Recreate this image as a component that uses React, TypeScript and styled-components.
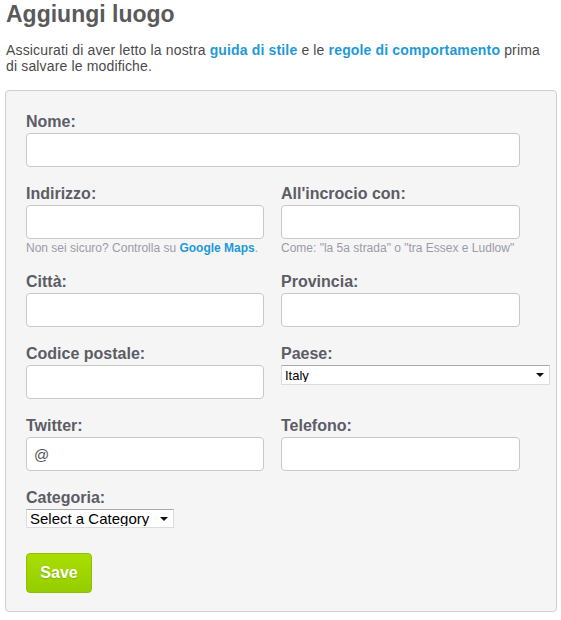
import React from "react";
import styled, { createGlobalStyle } from "styled-components";

const Global = createGlobalStyle`
  html, body { margin: 0; padding: 0; background: #fff; }
  body { font-family: "Liberation Sans", Arial, sans-serif; color: #444; }
  * { box-sizing: border-box; }
`;

const Page = styled.div`
  padding: 0 4px 0 5px;
  width: 561px;
`;

const Title = styled.h1`
  margin: 0;
  font-size: 23px;
  line-height: 28px;
  font-weight: bold;
  color: #5a5a5a;
  padding-left: 1px;
`;

const Intro = styled.p`
  margin: 14px 0 16px;
  padding-left: 1px;
  font-size: 14px;
  line-height: 16px;
  letter-spacing: 0.15px;
  color: #4a4a4a;
  width: 546px;
`;

const Link = styled.a`
  color: #1f9ad6;
  font-weight: bold;
  text-decoration: none;
`;

const Panel = styled.form`
  width: 552px;
  background: #f5f5f5;
  border: 1px solid #cfcfcf;
  border-radius: 4px;
  padding: 19px 20px 18px 20px;
  display: grid;
  grid-template-columns: 238px 239px;
  column-gap: 17px;
  row-gap: 15px;
  align-items: start;
`;

const Field = styled.div<{ $wide?: boolean }>`
  display: flex;
  flex-direction: column;
  grid-column: ${(p) => (p.$wide ? "1 / -1" : "auto")};
`;

const Label = styled.label`
  font-size: 16px;
  line-height: 20px;
  font-weight: bold;
  color: #5c5c66;
  padding-top: 2px;
  margin-bottom: 1px;
`;

const Input = styled.input`
  height: 34px;
  width: 100%;
  border: 1px solid #c9c9c9;
  border-radius: 4px;
  background: #fff;
  font-family: "Liberation Sans", Arial, sans-serif;
  font-size: 15px;
  color: #555;
  padding: 0 7px;
  outline: none;
`;

const Hint = styled.div`
  margin-top: 2px;
  font-size: 12px;
  line-height: 14px;
  color: #9b9ba6;
  white-space: nowrap;
`;

const HintLink = styled.a`
  color: #1f9ad6;
  font-weight: bold;
  text-decoration: none;
`;

const SelectWrap = styled.div<{ $w: number; $h: number }>`
  position: relative;
  width: ${(p) => p.$w}px;
  height: ${(p) => p.$h}px;
  &::after {
    content: "";
    position: absolute;
    right: 6px;
    top: 50%;
    margin-top: -2px;
    border-left: 4px solid transparent;
    border-right: 4px solid transparent;
    border-top: 4px solid #111;
    pointer-events: none;
  }
`;

const Select = styled.select<{ $size: number }>`
  appearance: none;
  -webkit-appearance: none;
  width: 100%;
  height: 100%;
  margin: 0;
  background: #fff;
  border: 1px solid #dcdcdc;
  border-top-color: #a9a9a9;
  border-radius: 0;
  font-family: "Liberation Sans", Arial, sans-serif;
  font-size: ${(p) => p.$size}px;
  color: #000;
  padding: 0 3px;
  line-height: 1;
  outline: none;
`;

const SaveRow = styled.div`
  grid-column: 1 / -1;
  margin-top: 10px;
`;

const SaveButton = styled.button`
  width: 66px;
  height: 40px;
  border: 1px solid #8fbf05;
  border-radius: 4px;
  background: linear-gradient(#a9de00, #95cd00);
  color: #fff;
  font-family: "Liberation Sans", Arial, sans-serif;
  font-weight: bold;
  font-size: 16px;
  text-shadow: 0 1px 1px rgba(80, 110, 0, 0.35);
  cursor: pointer;
  padding: 0;
`;

export default function App() {
  return (
    <>
      <Global />
      <Page>
        <Title>Aggiungi luogo</Title>
        <Intro>
          Assicurati di aver letto la nostra <Link href="#">guida di stile</Link> e le{" "}
          <Link href="#">regole di comportamento</Link> prima di salvare le modifiche.
        </Intro>
        <Panel onSubmit={(e) => e.preventDefault()}>
          <Field $wide>
            <Label>Nome:</Label>
            <Input />
          </Field>
          <Field>
            <Label>Indirizzo:</Label>
            <Input />
            <Hint>
              Non sei sicuro? Controlla su <HintLink href="#">Google Maps</HintLink>.
            </Hint>
          </Field>
          <Field>
            <Label>All'incrocio con:</Label>
            <Input />
            <Hint>Come: "la 5a strada" o "tra Essex e Ludlow"</Hint>
          </Field>
          <Field>
            <Label>Città:</Label>
            <Input />
          </Field>
          <Field>
            <Label>Provincia:</Label>
            <Input />
          </Field>
          <Field>
            <Label>Codice postale:</Label>
            <Input />
          </Field>
          <Field>
            <Label>Paese:</Label>
            <SelectWrap $w={269} $h={20}>
              <Select $size={13} defaultValue="Italy">
                <option>Italy</option>
              </Select>
            </SelectWrap>
          </Field>
          <Field>
            <Label>Twitter:</Label>
            <Input defaultValue="@" />
          </Field>
          <Field>
            <Label>Telefono:</Label>
            <Input />
          </Field>
          <Field $wide>
            <Label>Categoria:</Label>
            <SelectWrap $w={148} $h={19}>
              <Select $size={15} defaultValue="">
                <option value="">Select a Category</option>
              </Select>
            </SelectWrap>
          </Field>
          <SaveRow>
            <SaveButton type="submit">Save</SaveButton>
          </SaveRow>
        </Panel>
      </Page>
    </>
  );
}
